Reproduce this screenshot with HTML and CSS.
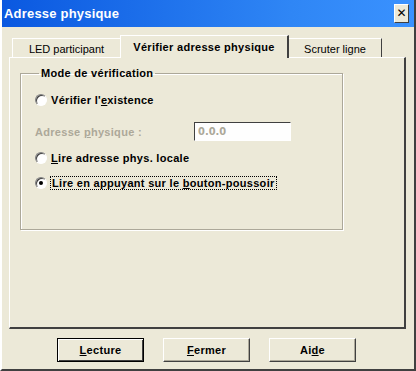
FILE: index.html
```html
<!DOCTYPE html>
<html>
<head>
  <meta charset="utf-8">
  <title>Adresse physique</title>
  <link rel="stylesheet" href="styles.css">
</head>
<body>
  <div class="window">
    <div class="titlebar">
      <span class="title">Adresse physique</span>
      <button class="close">&#x2715;</button>
    </div>
    <div class="content">
      <div class="tabs">
        <div class="tab tab-first">LED participant</div>
        <div class="tab tab-active">Vérifier adresse physique</div>
        <div class="tab">Scruter ligne</div>
      </div>
      <div class="panel">
        <fieldset class="group">
          <legend>Mode de vérification</legend>
          <label class="option">
            <span class="radio"></span>
            <span>Vérifier l'<u>e</u>xistence</span>
          </label>
          <div class="address-row">
            <span class="disabled">Adresse <u>p</u>hysique :</span>
            <input class="address" type="text" value="0.0.0" disabled>
          </div>
          <label class="option">
            <span class="radio"></span>
            <span><u>L</u>ire adresse phys. locale</span>
          </label>
          <label class="option">
            <span class="radio checked"></span>
            <span class="focus">Lire en appuyant sur le <u>b</u>outon-poussoir</span>
          </label>
        </fieldset>
      </div>
      <div class="buttons">
        <button class="btn btn-default"><u>L</u>ecture</button>
        <button class="btn"><u>F</u>ermer</button>
        <button class="btn">Ai<u>d</u>e</button>
      </div>
    </div>
  </div>
</body>
</html>
```

FILE: styles.css
```css
*{
  box-sizing:border-box;
}
body{
  margin:0;
  background:#ece9d8;
  font-family:"Liberation Sans", Arial, sans-serif;
  font-size:11px;
  font-weight:bold;
  letter-spacing:0.3px;
  color:#000;
}
.window{
  width:416px;
  height:371px;
  background:#ece9d8;
  border-left:2px solid #fff;
  border-right:2px solid #404040;
  border-bottom:2px solid #404040;
  display:flex;
  flex-direction:column;
  overflow:hidden;
}
.titlebar{
  height:27px;
  margin:0 -2px 0 -2px;
  background:linear-gradient(to right,#0a58e0,#2f86f5 70%,#3a92ff);
  display:flex;
  align-items:center;
  justify-content:space-between;
  padding:0 7px 0 4px;
}
.title{
  color:#fff;
  font-size:13px;
  letter-spacing:0.2px;
}
.close{
  width:15px;
  height:19px;
  padding:0;
  background:#ece9d8;
  border:1px solid;
  border-color:#fff #404040 #404040 #fff;
  font-family:"DejaVu Sans", sans-serif;
  font-size:12px;
  font-weight:bold;
  line-height:17px;
  color:#000;
}
.content{
  flex:1;
  display:flex;
  flex-direction:column;
  padding:8px 0 0 7px;
}
.tabs{
  display:flex;
  align-items:flex-end;
  height:22px;
  padding-left:3px;
}
.tab{
  width:94px;
  height:20px;
  padding:0;
  border-top:1px solid #fff;
  border-left:1px solid #fff;
  border-right:1px solid #404040;
  font-weight:normal;
  letter-spacing:0;
  display:flex;
  align-items:center;
  justify-content:center;
  margin-bottom:-1px;
}
.tab-first{
  width:109px;
}
.tab-active{
  width:169px;
  height:23px;
  font-weight:bold;
  letter-spacing:0.3px;
  margin:0 -1px -1px -1px;
  background:#ece9d8;
  position:relative;
  z-index:1;
  border-right:2px solid #404040;
}
.panel{
  width:397px;
  height:272px;
  border-top:1px solid #fff;
  border-left:1px solid #fff;
  border-right:2px solid #404040;
  border-bottom:2px solid #404040;
  padding:9px 0 0 10px;
}
.group{
  margin:0;
  width:323px;
  height:163px;
  border:1px solid #aca899;
  box-shadow:1px 1px 0 #fff, inset 1px 1px 0 #fff;
  padding:13px 0 0 14px;
}
.group legend{
  padding:0 2px;
  margin-left:4px;
}
.option{
  display:flex;
  align-items:center;
  gap:4px;
  height:16px;
}
.option + .address-row{
  margin-top:14px;
}
.address-row + .option{
  margin-top:9px;
}
.option + .option{
  margin-top:9px;
}
.radio{
  width:12px;
  height:12px;
  border-radius:50%;
  background:#fff;
  border:1px solid;
  border-color:#808080 #fff #fff #808080;
  box-shadow:inset 1px 1px 0 #404040;
  display:flex;
  align-items:center;
  justify-content:center;
}
.radio.checked::after{
  content:"";
  width:4px;
  height:4px;
  border-radius:50%;
  background:#000;
}
.focus{
  outline:1px dotted #000;
  outline-offset:0;
  padding:0 1px;
}
.address-row{
  display:flex;
  align-items:center;
  justify-content:space-between;
  width:256px;
}
.disabled{
  color:#aca899;
}
.address{
  width:97px;
  height:19px;
  background:#fefefe;
  border:1px solid;
  border-color:#404040 #fff #fff #404040;
  font-family:"DejaVu Sans Condensed","DejaVu Sans",sans-serif;
  font-size:11px;
  font-weight:bold;
  color:#aca899;
  padding:0 3px;
}
.buttons{
  display:flex;
  gap:19px;
  padding:9px 0 0 48px;
}
.btn{
  width:87px;
  height:24px;
  background:#ece9d8;
  border:1px solid;
  border-color:#fff #404040 #404040 #fff;
  box-shadow:inset -1px -1px 0 #aca899;
  font-family:inherit;
  font-size:11px;
  font-weight:bold;
  letter-spacing:0.3px;
  color:#000;
  padding:0;
}
.btn-default{
  border-color:#000;
  box-shadow:inset 1px 1px 0 #fff, inset -1px -1px 0 #404040;
}
```
